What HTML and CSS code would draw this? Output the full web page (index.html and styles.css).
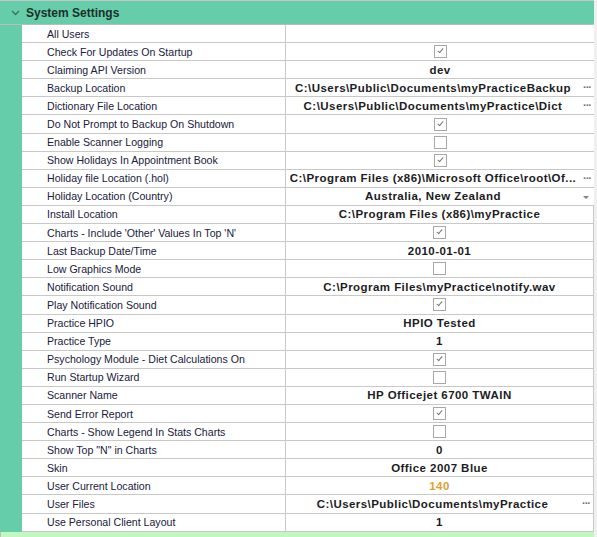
FILE: index.html
```html
<!DOCTYPE html>
<html>
<head>
<meta charset="utf-8">
<link rel="stylesheet" href="styles.css">
</head>
<body>
<div class="panel">
  <div class="header">
    <svg class="chev" width="9" height="6" viewBox="0 0 9 6"><path d="M1 1 L4.5 4.5 L8 1" fill="none" stroke="#3d6e60" stroke-width="1.3"/></svg>
    <span class="title">System Settings</span>
  </div>
  <div class="body">
    <div class="gutter"></div>
    <div class="rows">
      <div class="row"><div class="label">All Users</div><div class="value"></div></div>
      <div class="row"><div class="label">Check For Updates On Startup</div><div class="value"><span class="cb checked"></span></div></div>
      <div class="row"><div class="label">Claiming API Version</div><div class="value">dev</div></div>
      <div class="row"><div class="label">Backup Location</div><div class="value btn">C:\Users\Public\Documents\myPracticeBackup<span class="dots">···</span></div></div>
      <div class="row"><div class="label">Dictionary File Location</div><div class="value btn">C:\Users\Public\Documents\myPractice\Dict<span class="dots">···</span></div></div>
      <div class="row"><div class="label">Do Not Prompt to Backup On Shutdown</div><div class="value"><span class="cb checked"></span></div></div>
      <div class="row"><div class="label">Enable Scanner Logging</div><div class="value"><span class="cb"></span></div></div>
      <div class="row"><div class="label">Show Holidays In Appointment Book</div><div class="value"><span class="cb checked"></span></div></div>
      <div class="row"><div class="label">Holiday file Location (.hol)</div><div class="value btn">C:\Program Files (x86)\Microsoft Office\root\Of...<span class="dots">···</span></div></div>
      <div class="row"><div class="label">Holiday Location (Country)</div><div class="value btn">Australia, New Zealand<span class="drop"></span></div></div>
      <div class="row edge"><div class="label">Install Location</div><div class="value">C:\Program Files (x86)\myPractice</div></div>
      <div class="row edge"><div class="label">Charts - Include 'Other' Values In Top 'N'</div><div class="value"><span class="cb checked"></span></div></div>
      <div class="row edge"><div class="label">Last Backup Date/Time</div><div class="value">2010-01-01</div></div>
      <div class="row edge"><div class="label">Low Graphics Mode</div><div class="value"><span class="cb"></span></div></div>
      <div class="row edge"><div class="label">Notification Sound</div><div class="value">C:\Program Files\myPractice\notify.wav</div></div>
      <div class="row edge"><div class="label">Play Notification Sound</div><div class="value"><span class="cb checked"></span></div></div>
      <div class="row edge"><div class="label">Practice HPIO</div><div class="value">HPIO Tested</div></div>
      <div class="row edge"><div class="label">Practice Type</div><div class="value">1</div></div>
      <div class="row edge"><div class="label">Psychology Module - Diet Calculations On</div><div class="value"><span class="cb checked"></span></div></div>
      <div class="row edge"><div class="label">Run Startup Wizard</div><div class="value"><span class="cb"></span></div></div>
      <div class="row edge"><div class="label">Scanner Name</div><div class="value">HP Officejet 6700 TWAIN</div></div>
      <div class="row edge"><div class="label">Send Error Report</div><div class="value"><span class="cb checked"></span></div></div>
      <div class="row edge"><div class="label">Charts - Show Legend In Stats Charts</div><div class="value"><span class="cb"></span></div></div>
      <div class="row edge"><div class="label">Show Top "N" in Charts</div><div class="value">0</div></div>
      <div class="row edge"><div class="label">Skin</div><div class="value">Office 2007 Blue</div></div>
      <div class="row edge"><div class="label">User Current Location</div><div class="value accent">140</div></div>
      <div class="row edge"><div class="label">User Files</div><div class="value btn">C:\Users\Public\Documents\myPractice<span class="dots">···</span></div></div>
      <div class="row edge"><div class="label">Use Personal Client Layout</div><div class="value">1</div></div>
    </div>
  </div>
  <div class="footer"></div>
</div>
</body>
</html>
```

FILE: styles.css
```css
html, body {
  margin: 0;
  padding: 0;
  background: #f0f0f0;
}
body {
  font-family: "Liberation Sans", Arial, sans-serif;
  font-size: 11px;
  width: 597px;
  height: 537px;
  overflow: hidden;
}
.panel {
  width: 594px;
  border-top: 1px solid #c6c6c6;
  background: #ffffff;
}
.header {
  background: #66cdaa;
  border-bottom: 1px solid #bcbcbc;
  display: flex;
  align-items: center;
  box-sizing: border-box;
  height: 24px;
}
.chev {
  margin-left: 11px;
  margin-right: 6px;
}
.title {
  font-weight: bold;
  font-size: 12px;
  color: #1e2e2a;
}
.body {
  display: flex;
}
.gutter {
  width: 22px;
  background: #66cdaa;
  flex: none;
}
.rows {
  flex: 1;
  display: grid;
  grid-auto-rows: 18.1px;
}
.row {
  display: grid;
  grid-template-columns: 264px 1fr;
  border-bottom: 1px solid #c8c8c8;
  box-sizing: border-box;
}
.row.edge {
  border-right: 1px solid #c8c8c8;
}
.label {
  border-right: 1px solid #c8c8c8;
  padding-left: 25px;
  color: #20203c;
  font-size: 10.6px;
  display: flex;
  align-items: center;
  white-space: nowrap;
  overflow: hidden;
}
.value {
  display: flex;
  align-items: center;
  justify-content: center;
  font-weight: bold;
  font-size: 11.5px;
  letter-spacing: 0.45px;
  color: #1c1c24;
  white-space: nowrap;
  position: relative;
}
.value.btn {
  padding-right: 14px;
}
.value.accent {
  color: #e0a030;
}
.dots {
  position: absolute;
  right: 3px;
  top: 2px;
  font-weight: bold;
  color: #707070;
  letter-spacing: -1px;
  font-size: 11px;
}
.drop {
  position: absolute;
  right: 5px;
  top: 8px;
  width: 0;
  height: 0;
  border-left: 3px solid transparent;
  border-right: 3px solid transparent;
  border-top: 3px solid #808080;
}
.cb {
  width: 11px;
  height: 11px;
  border: 1px solid #a8a8a8;
  background: #fff;
  position: relative;
}
.cb.checked::after {
  content: "";
  position: absolute;
  left: 4px;
  top: 1px;
  width: 2px;
  height: 5px;
  border-right: 1.5px solid #7a7a7a;
  border-bottom: 1.5px solid #7a7a7a;
  transform: rotate(40deg);
}
.footer {
  height: 6px;
  background: #c2f7c2;
  border-left: 1px solid #c0c0c0;
}
```
